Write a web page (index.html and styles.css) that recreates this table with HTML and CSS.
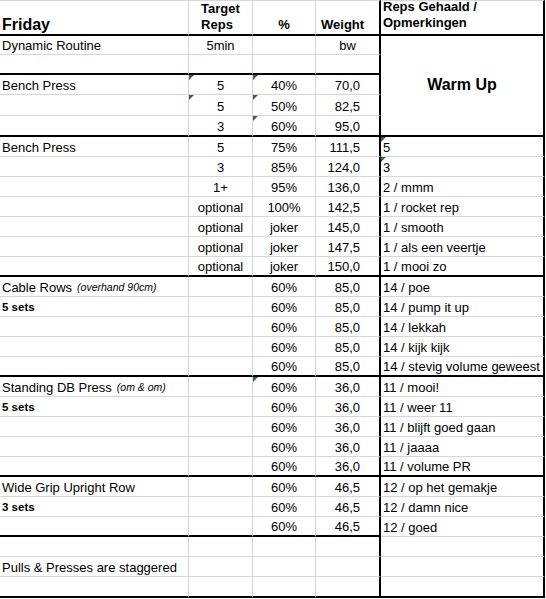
FILE: index.html
```html
<!DOCTYPE html>
<html>
<head>
<meta charset="utf-8">
<link rel="stylesheet" href="styles.css">
</head>
<body>
<div class="sheet">
  <div class="row head">
    <div class="c h-day">Friday</div>
    <div class="c n h">Target<br>Reps</div>
    <div class="c n h">%</div>
    <div class="c h h-wt">Weight</div>
    <div class="c h h-notes"><span>Reps Gehaald /<br>Opmerkingen</span></div>
  </div>

  <div class="row">
    <div class="c">Dynamic Routine</div>
    <div class="c n">5min</div>
    <div class="c n"></div>
    <div class="c n">bw</div>
    <div class="c warm">Warm Up</div>
  </div>
  <div class="row end">
    <div class="c"></div><div class="c"></div><div class="c"></div><div class="c"></div>
  </div>
  <div class="row">
    <div class="c">Bench Press</div>
    <div class="c n tri">5</div>
    <div class="c n tri">40%</div>
    <div class="c num">70,0</div>
  </div>
  <div class="row">
    <div class="c"></div>
    <div class="c n tri">5</div>
    <div class="c n tri">50%</div>
    <div class="c num">82,5</div>
  </div>
  <div class="row end">
    <div class="c"></div>
    <div class="c n">3</div>
    <div class="c n tri">60%</div>
    <div class="c num">95,0</div>
  </div>

  <div class="row">
    <div class="c">Bench Press</div>
    <div class="c n">5</div>
    <div class="c n">75%</div>
    <div class="c num">111,5</div>
    <div class="c tri">5</div>
  </div>
  <div class="row">
    <div class="c"></div>
    <div class="c n">3</div>
    <div class="c n">85%</div>
    <div class="c num">124,0</div>
    <div class="c tri">3</div>
  </div>
  <div class="row">
    <div class="c"></div>
    <div class="c n">1+</div>
    <div class="c n">95%</div>
    <div class="c num">136,0</div>
    <div class="c">2 / mmm</div>
  </div>
  <div class="row">
    <div class="c"></div>
    <div class="c n">optional</div>
    <div class="c n">100%</div>
    <div class="c num">142,5</div>
    <div class="c">1 / rocket rep</div>
  </div>
  <div class="row">
    <div class="c"></div>
    <div class="c n">optional</div>
    <div class="c n">joker</div>
    <div class="c num">145,0</div>
    <div class="c">1 / smooth</div>
  </div>
  <div class="row">
    <div class="c"></div>
    <div class="c n">optional</div>
    <div class="c n">joker</div>
    <div class="c num">147,5</div>
    <div class="c">1 / als een veertje</div>
  </div>
  <div class="row end">
    <div class="c"></div>
    <div class="c n">optional</div>
    <div class="c n">joker</div>
    <div class="c num">150,0</div>
    <div class="c">1 / mooi zo</div>
  </div>

  <div class="row">
    <div class="c">Cable Rows <i class="note">(overhand 90cm)</i></div>
    <div class="c"></div>
    <div class="c n">60%</div>
    <div class="c num">85,0</div>
    <div class="c">14 / poe</div>
  </div>
  <div class="row">
    <div class="c sets">5 sets</div>
    <div class="c"></div>
    <div class="c n">60%</div>
    <div class="c num">85,0</div>
    <div class="c">14 / pump it up</div>
  </div>
  <div class="row">
    <div class="c"></div>
    <div class="c"></div>
    <div class="c n">60%</div>
    <div class="c num">85,0</div>
    <div class="c">14 / lekkah</div>
  </div>
  <div class="row">
    <div class="c"></div>
    <div class="c"></div>
    <div class="c n">60%</div>
    <div class="c num">85,0</div>
    <div class="c">14 / kijk kijk</div>
  </div>
  <div class="row end">
    <div class="c"></div>
    <div class="c"></div>
    <div class="c n">60%</div>
    <div class="c num">85,0</div>
    <div class="c">14 / stevig volume geweest</div>
  </div>

  <div class="row">
    <div class="c">Standing DB Press <i class="note">(om &amp; om)</i></div>
    <div class="c"></div>
    <div class="c n tri">60%</div>
    <div class="c num">36,0</div>
    <div class="c">11 / mooi!</div>
  </div>
  <div class="row">
    <div class="c sets">5 sets</div>
    <div class="c"></div>
    <div class="c n">60%</div>
    <div class="c num">36,0</div>
    <div class="c">11 / weer 11</div>
  </div>
  <div class="row">
    <div class="c"></div>
    <div class="c"></div>
    <div class="c n">60%</div>
    <div class="c num">36,0</div>
    <div class="c">11 / blijft goed gaan</div>
  </div>
  <div class="row">
    <div class="c"></div>
    <div class="c"></div>
    <div class="c n">60%</div>
    <div class="c num">36,0</div>
    <div class="c">11 / jaaaa</div>
  </div>
  <div class="row end">
    <div class="c"></div>
    <div class="c"></div>
    <div class="c n">60%</div>
    <div class="c num">36,0</div>
    <div class="c">11 / volume PR</div>
  </div>

  <div class="row">
    <div class="c">Wide Grip Upright Row</div>
    <div class="c"></div>
    <div class="c n">60%</div>
    <div class="c num">46,5</div>
    <div class="c">12 / op het gemakje</div>
  </div>
  <div class="row">
    <div class="c sets">3 sets</div>
    <div class="c"></div>
    <div class="c n">60%</div>
    <div class="c num">46,5</div>
    <div class="c">12 / damn nice</div>
  </div>
  <div class="row end-left">
    <div class="c"></div>
    <div class="c"></div>
    <div class="c n">60%</div>
    <div class="c num">46,5</div>
    <div class="c">12 / goed</div>
  </div>

  <div class="row">
    <div class="c"></div><div class="c"></div><div class="c"></div><div class="c"></div><div class="c"></div>
  </div>
  <div class="row">
    <div class="c">Pulls &amp; Presses are staggered</div>
    <div class="c"></div><div class="c"></div><div class="c"></div><div class="c"></div>
  </div>
  <div class="row end">
    <div class="c"></div><div class="c"></div><div class="c"></div><div class="c"></div><div class="c"></div>
  </div>
</div>
</body>
</html>
```

FILE: styles.css
```css
html, body {
  margin: 0;
  padding: 0;
  background: #ffffff;
}

body {
  font-family: "Liberation Sans", Arial, sans-serif;
  color: #000000;
  font-size: 13px;
}

.sheet {
  display: grid;
  width: 545px;
  grid-template-columns: 189px 64px 63px 65px 164px;
  grid-template-rows: 36px 19px 20px 20px 21px 21px repeat(22, 20px) 21px;
}

.row {
  display: contents;
}

.c {
  position: relative;
  box-sizing: border-box;
  display: flex;
  align-items: flex-end;
  justify-content: flex-start;
  padding: 0 2px 1px 2px;
  line-height: 15px;
  white-space: nowrap;
  border-right: 1px solid #d6d6d6;
  border-bottom: 1px solid #d6d6d6;
  min-width: 0;
}

/* column D has the dark divider to the notes column */
.row > .c:nth-child(4) {
  border-right: 2px solid #000000;
}

/* notes column: dark outer right edge */
.row > .c:nth-child(5),
.warm {
  border-right: 2px solid #000000;
}

.n {
  justify-content: center;
}

.num {
  justify-content: flex-end;
  padding-right: 19px;
}

/* header */
.head > .c {
  border-top: 1px solid #d6d6d6;
  border-bottom: 2px solid #000000;
  font-weight: bold;
  line-height: 16px;
}

.h-day {
  font-size: 16px;
  line-height: 18px;
}

.h-wt {
  padding-left: 5px;
}

.h-notes {
  align-items: flex-start;
  line-height: 17px;
}

.h-notes span {
  margin-top: -2px;
}

.warm {
  grid-row: span 5;
  align-items: center;
  justify-content: center;
  font-weight: bold;
  font-size: 16px;
  padding: 0 0 2px 0;
  border-bottom: 2px solid #000000;
}

.row.end > .c {
  border-bottom: 2px solid #000000;
}

.row.end-left > .c:not(:nth-child(5)) {
  border-bottom: 2px solid #000000;
}

.note {
  font-size: 10.5px;
  margin-left: 5px;
}

.sets {
  font-weight: bold;
  font-size: 11.5px;
}

/* Excel error-indicator triangle */
.tri::before {
  content: "";
  position: absolute;
  top: 0;
  left: 0;
  width: 0;
  height: 0;
  border-top: 5px solid #2f6f2f;
  border-right: 5px solid transparent;
}
```
